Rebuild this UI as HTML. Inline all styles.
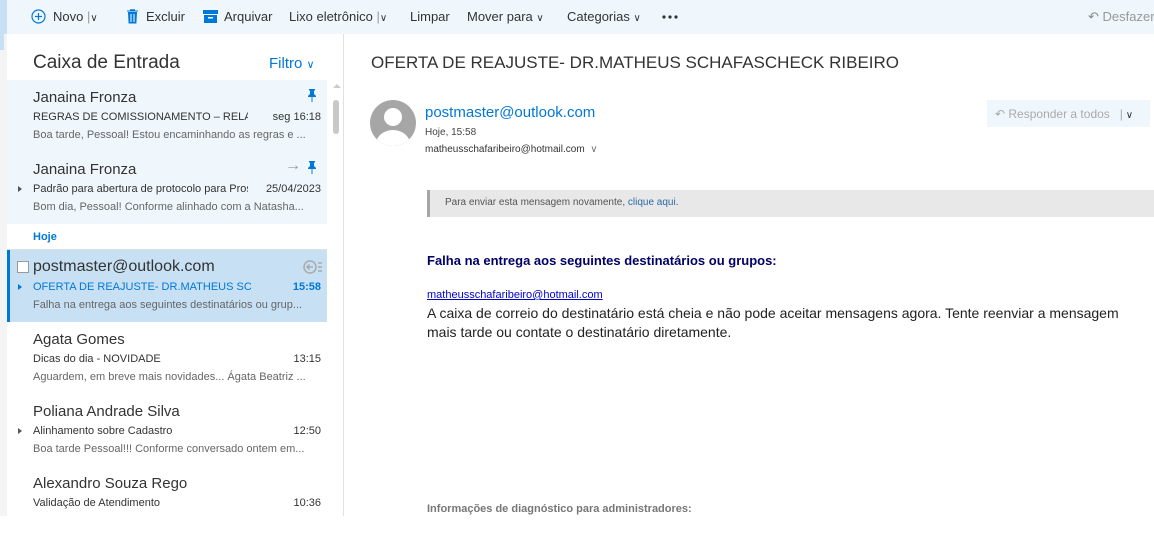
<!DOCTYPE html>
<html><head><meta charset="utf-8"><style>
*{box-sizing:border-box;margin:0;padding:0;white-space:nowrap}
body{width:1154px;height:516px;overflow:hidden;background:#fff;font-family:"Liberation Sans",sans-serif;color:#333;position:relative}
.a{position:absolute}
.tb{position:absolute;left:0;top:0;width:1154px;height:34px;background:#eff6fc}
.tbi{position:absolute;top:9px;font-size:13px;color:#333}
.item{position:absolute;left:7px;width:320px;height:72px;overflow:hidden}
.nm{position:absolute;left:26px;top:9px;font-size:15px;color:#333}
.sb{position:absolute;left:26px;top:31px;font-size:11px;color:#333;width:215px;overflow:hidden}
.dt{position:absolute;right:6px;top:31px;font-size:11px;color:#333}
.pv{position:absolute;left:26px;top:49px;font-size:11px;color:#666}
.tri{position:absolute;left:11px;top:34px;width:0;height:0;border-left:4px solid #555;border-top:3.5px solid transparent;border-bottom:3.5px solid transparent}
.pin{position:absolute;left:300px;top:9px}
</style></head><body>
<div class="tb"></div>
<div class="a" style="left:0;top:0;width:7px;height:34px;background:#c7e0f4"></div>
<svg class="a" style="left:31px;top:9px" width="15" height="15" viewBox="0 0 15 15"><circle cx="7.5" cy="7.5" r="6.5" fill="none" stroke="#0078d7" stroke-width="1.2"/><path d="M7.5 4v7M4 7.5h7" stroke="#0078d7" stroke-width="1.2"/></svg>
<div class="tbi" style="left:53px">Novo <span style="color:#999">|</span><span style="font-size:10px">&#8744;</span></div>
<svg class="a" style="left:126px;top:9px" width="13" height="15" viewBox="0 0 13 15"><path d="M1 2h11M4.5 2V0.8h4V2M2.5 3.5h8l-.6 10.5h-6.8z" fill="#0078d7" stroke="#0078d7"/><path d="M5 5v8M8 5v8" stroke="#fff"/></svg>
<div class="tbi" style="left:146px">Excluir</div>
<svg class="a" style="left:203px;top:10px" width="15" height="13" viewBox="0 0 15 13"><rect x="0" y="0" width="15" height="4" fill="#0078d7"/><rect x="1" y="5" width="13" height="8" fill="#0078d7"/><rect x="5" y="7" width="5" height="1.5" fill="#fff"/></svg>
<div class="tbi" style="left:224px">Arquivar</div>
<div class="tbi" style="left:289px">Lixo eletrônico <span style="color:#999">|</span><span style="font-size:10px">&#8744;</span></div>
<div class="tbi" style="left:410px">Limpar</div>
<div class="tbi" style="left:467px">Mover para <span style="font-size:10px">&#8744;</span></div>
<div class="tbi" style="left:567px">Categorias <span style="font-size:10px">&#8744;</span></div>
<svg class="a" style="left:662px;top:15px" width="16" height="4"><circle cx="2" cy="2" r="1.6" fill="#333"/><circle cx="8" cy="2" r="1.6" fill="#333"/><circle cx="14" cy="2" r="1.6" fill="#333"/></svg>
<div class="tbi" style="left:1088px;color:#999"><span style="color:#888">&#8630;</span> Desfazer</div>

<div class="a" style="left:0;top:34px;width:7px;height:482px;background:#f4f4f4"></div>
<div class="a" style="left:0;top:34px;width:4px;height:16px;background:#c7e0f4"></div>
<div class="a" style="left:343px;top:34px;width:1px;height:482px;background:#e1e1e1"></div>

<div class="a" style="left:33px;top:52px;font-size:19px;color:#333">Caixa de Entrada</div>
<div class="a" style="left:269px;top:55px;font-size:15px;color:#0078d7">Filtro <span style="font-size:11px">&#8744;</span></div>

<div class="a" style="left:333px;top:84px;width:0;height:0;border-bottom:4px solid #ccc;border-left:4px solid transparent;border-right:4px solid transparent"></div>
<div class="a" style="left:333px;top:100px;width:6px;height:34px;background:#c8c8c8;border-radius:3px"></div>

<div class="item" style="top:80px;background:#eff6fc">
<div class="nm">Janaina Fronza</div><svg class="pin" width="10" height="13" viewBox="0 0 10 13"><path d="M2 0h6v1.5H7v3.5l2 2v1H1v-1l2-2V1.5H2z M4.5 8h1v5h-1z" fill="#0078d7"/></svg>
<div class="sb">REGRAS DE COMISSIONAMENTO – RELACIONAMENTO</div><div class="dt">seg 16:18</div>
<div class="pv">Boa tarde, Pessoal! Estou encaminhando as regras e ...</div></div>
<div class="item" style="top:152px;background:#eff6fc">
<div class="nm">Janaina Fronza</div><div class="a" style="left:278px;top:5px;color:#999;font-size:16px;font-weight:bold">&#8594;</div><svg class="pin" width="10" height="13" viewBox="0 0 10 13"><path d="M2 0h6v1.5H7v3.5l2 2v1H1v-1l2-2V1.5H2z M4.5 8h1v5h-1z" fill="#0078d7"/></svg>
<div class="tri"></div><div class="sb">Padrão para abertura de protocolo para Prospecção</div><div class="dt">25/04/2023</div>
<div class="pv">Bom dia, Pessoal! Conforme alinhado com a Natasha...</div></div>
<div class="a" style="left:33px;top:231px;font-size:11px;color:#0078d7;font-weight:bold">Hoje</div>
<div class="a" style="left:7px;top:249px;width:320px;height:1px;background:#e1e1e1"></div>
<div class="item" style="top:250px;background:#c7e0f4;border-left:3px solid #0078d7">
<div class="a" style="left:7px;top:11px;width:12px;height:12px;background:#fff;border:1px solid #999"></div>
<div class="nm" style="left:23px;font-size:16px;top:8px">postmaster@outlook.com</div>
<svg class="a" style="left:293px;top:10px" width="20" height="14" viewBox="0 0 20 14"><circle cx="7" cy="7" r="6" fill="none" stroke="#aaa" stroke-width="1.5"/><path d="M10 7H4M6.5 4.5L4 7l2.5 2.5" stroke="#aaa" stroke-width="1.5" fill="none"/><path d="M15 3h4M15 7h4M15 11h4" stroke="#aaa" stroke-width="1.5"/></svg>
<div class="tri" style="left:8px;border-left-color:#0078d7"></div><div class="sb" style="left:23px;color:#0078d7;width:218px">OFERTA DE REAJUSTE- DR.MATHEUS SCHAFASCHECK</div><div class="dt" style="color:#0078d7;font-weight:bold">15:58</div>
<div class="pv" style="left:23px">Falha na entrega aos seguintes destinatários ou grup...</div></div>
<div class="item" style="top:322px">
<div class="nm">Agata Gomes</div>
<div class="sb">Dicas do dia - NOVIDADE</div><div class="dt">13:15</div>
<div class="pv">Aguardem, em breve mais novidades... Ágata Beatriz ...</div></div>
<div class="item" style="top:394px">
<div class="nm">Poliana Andrade Silva</div>
<div class="tri"></div><div class="sb">Alinhamento sobre Cadastro</div><div class="dt">12:50</div>
<div class="pv">Boa tarde Pessoal!!! Conforme conversado ontem em...</div></div>
<div class="item" style="top:466px">
<div class="nm">Alexandro Souza Rego</div>
<div class="sb">Validação de Atendimento</div><div class="dt">10:36</div></div>

<div class="a" style="left:371px;top:53px;font-size:17px;color:#333">OFERTA DE REAJUSTE- DR.MATHEUS SCHAFASCHECK RIBEIRO</div>
<svg class="a" style="left:370px;top:100px" width="46" height="46" viewBox="0 0 46 46"><clipPath id="c"><circle cx="23" cy="23" r="23"/></clipPath><g clip-path="url(#c)"><rect width="46" height="46" fill="#a6a6a6"/><circle cx="23" cy="17" r="9" fill="#fff"/><ellipse cx="23" cy="44" rx="17" ry="14" fill="#fff"/></g></svg>
<div class="a" style="left:425px;top:104px;font-size:15px;color:#0078d7">postmaster@outlook.com</div>
<div class="a" style="left:425px;top:127px;font-size:10px;color:#444">Hoje, 15:58</div>
<div class="a" style="left:425px;top:144px;font-size:10px;color:#333">matheusschafaribeiro@hotmail.com &nbsp;<span style="color:#777">&#8744;</span></div>
<div class="a" style="left:987px;top:100px;width:163px;height:27px;background:#eff6fc"></div>
<div class="a" style="left:995px;top:107px;font-size:12px;color:#aaa">&#8630; Responder a todos &nbsp;&nbsp;<span>|</span><span style="color:#333;font-size:10px"> &#8744;</span></div>

<div class="a" style="left:427px;top:190px;width:727px;height:27px;background:#e8e8e8;border-left:3px solid #a6a6a6"></div>
<div class="a" style="left:445px;top:197px;font-size:10px;color:#555">Para enviar esta mensagem novamente, <span style="color:#2a6aa8">clique aqui</span>.</div>

<div class="a" style="left:427px;top:253px;font-size:13px;font-weight:bold;color:#000066">Falha na entrega aos seguintes destinatários ou grupos:</div>
<div class="a" style="left:427px;top:289px;font-size:11px;color:#0000cc;text-decoration:underline">matheusschafaribeiro@hotmail.com</div>
<div class="a" style="left:427px;top:304px;font-size:14px;color:#222;line-height:19px">A caixa de correio do destinatário está cheia e não pode aceitar mensagens agora. Tente reenviar a mensagem<br>mais tarde ou contate o destinatário diretamente.</div>
<div class="a" style="left:427px;top:503px;font-size:11px;font-weight:bold;color:#777">Informações de diagnóstico para administradores:</div>
</body></html>
